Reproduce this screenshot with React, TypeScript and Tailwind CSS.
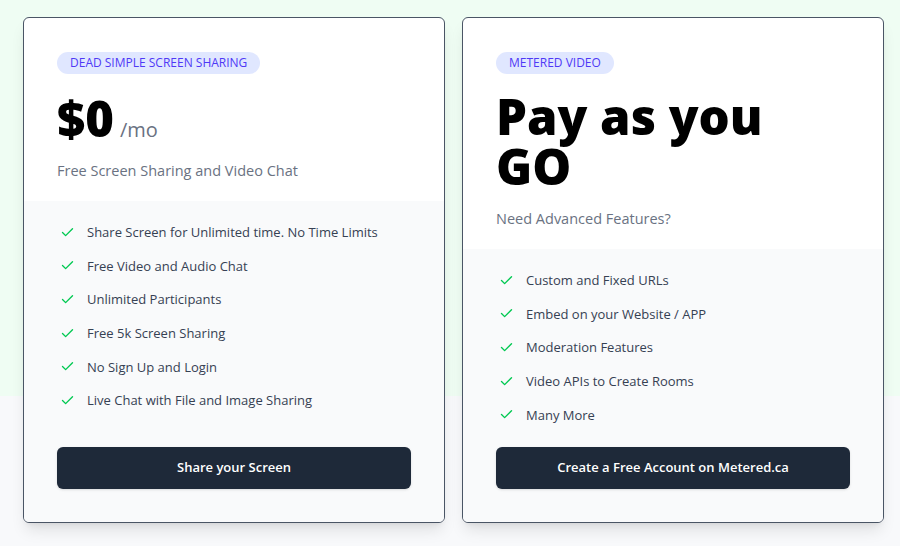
import React from "react";
import { Check } from "lucide-react";

type Plan = {
  badge: string;
  title: React.ReactNode;
  subtitle: string;
  subMt: string;
  features: string[];
  cta: string;
};

const plans: Plan[] = [
  {
    badge: "Dead Simple Screen Sharing",
    title: (
      <div className="flex items-baseline text-[49px] leading-[54px] font-extrabold text-black">
        $0
        <span className="ml-[6px] text-[20px] leading-none font-medium text-gray-500">/mo</span>
      </div>
    ),
    subtitle: "Free Screen Sharing and Video Chat",
    subMt: "mt-[15px]",
    features: [
      "Share Screen for Unlimited time. No Time Limits",
      "Free Video and Audio Chat",
      "Unlimited Participants",
      "Free 5k Screen Sharing",
      "No Sign Up and Login",
      "Live Chat with File and Image Sharing",
    ],
    cta: "Share your Screen",
  },
  {
    badge: "Metered Video",
    title: (
      <h2 className="w-[300px] text-[49px] leading-[50px] font-extrabold text-black">Pay as you GO</h2>
    ),
    subtitle: "Need Advanced Features?",
    subMt: "mt-[17px]",
    features: [
      "Custom and Fixed URLs",
      "Embed on your Website / APP",
      "Moderation Features",
      "Video APIs to Create Rooms",
      "Many More",
    ],
    cta: "Create a Free Account on Metered.ca",
  },
];

function PlanCard({ plan }: { plan: Plan }) {
  return (
    <div className="flex h-[506px] w-[422px] flex-col overflow-hidden rounded-md border border-gray-600 bg-white shadow-lg">
      <div className="px-[33px] pt-[31px] pb-[19px]">
        <span className="inline-flex h-[22px] items-center rounded-full bg-indigo-100 px-[13px] text-[12px] font-medium uppercase text-indigo-600">
          {plan.badge}
        </span>
        <div className="mt-[17px]">{plan.title}</div>
        <p className={`${plan.subMt} text-[14.5px] leading-[22px] text-gray-500`}>{plan.subtitle}</p>
      </div>
      <div className="flex flex-1 flex-col justify-between bg-gray-50 px-[33px] pt-[21px] pb-[33px]">
        <ul className="flex flex-col gap-[13.7px]">
          {plan.features.map((f) => (
            <li key={f} className="flex items-center text-[13px] leading-[20px] text-gray-700">
              <Check className="ml-[3px] h-[15px] w-[15px] text-green-500" strokeWidth={2.2} />
              <span className="ml-[12px]">{f}</span>
            </li>
          ))}
        </ul>
        <button className="h-[42px] w-full rounded-md bg-gray-800 text-[13px] font-semibold text-white shadow">
          {plan.cta}
        </button>
      </div>
    </div>
  );
}

export default function App() {
  return (
    <main
      className="min-h-[546px] w-[900px] overflow-hidden bg-[linear-gradient(to_bottom,#effdf3_396px,#f8f9fb_396px)] pt-[17px] pl-[23px]"
      style={{ fontFamily: '"Open Sans", "Noto Sans", sans-serif' }}
    >
      <div className="flex gap-[17px]">
        {plans.map((p) => (
          <PlanCard key={p.cta} plan={p} />
        ))}
      </div>
    </main>
  );
}
